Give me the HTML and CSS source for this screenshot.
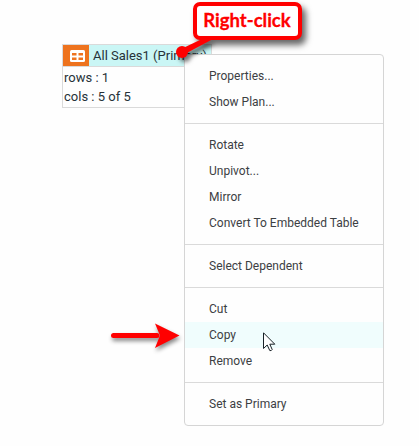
FILE: index.html
```
<!DOCTYPE html>
<html lang="en">
<head>
<meta charset="utf-8">
<title>Table menu</title>
<link rel="stylesheet" href="styles.css">
</head>
<body>
<main class="canvas">
  <section class="table-node">
    <header class="node-header">
      <span class="node-icon">
        <svg width="15" height="12" viewBox="0 0 15 12"><rect width="15" height="12" rx="1.5" fill="#fff"/><path d="M2 3h4.500v2.500H2zM8.500 3H13v2.500H8.500zM2 7.500h4.500V10H2zM8.500 7.500H13V10H8.500z" fill="#ee731e"/></svg>
      </span>
      <span class="node-title">All Sales1 (Primary)</span>
    </header>
    <div class="node-row">rows : 1</div>
    <div class="node-row">cols : 5 of 5</div>
  </section>

  <nav class="menu">
    <div class="group">
      <div class="item">Properties...</div>
      <div class="item">Show Plan...</div>
    </div>
    <div class="group">
      <div class="item">Rotate</div>
      <div class="item">Unpivot...</div>
      <div class="item">Mirror</div>
      <div class="item">Convert To Embedded Table</div>
    </div>
    <div class="group">
      <div class="item">Select Dependent</div>
    </div>
    <div class="group">
      <div class="item">Cut</div>
      <div class="item active">Copy</div>
      <div class="item">Remove</div>
    </div>
    <div class="group">
      <div class="item">Set as Primary</div>
    </div>
  </nav>

  <div class="callout">Right-click</div>
  <svg class="pointer" width="50" height="40" viewBox="0 0 50 40"><path d="M11 21L32 11H43L13 27z" fill="#f00"/><circle cx="12" cy="24" r="6" fill="#f00"/></svg>
  <svg class="arrow" width="80" height="36" viewBox="0 0 80 36"><path d="M8.500 15.500H52" stroke="#f00" stroke-width="5" stroke-linecap="round"/><path d="M50 3.500L74.500 15.500L50 28L55 15.500z" fill="#f00"/></svg>
  <svg class="cursor" width="13" height="20" viewBox="0 0 13 20"><path d="M.5.8V16.500L4.200 13L6.800 18.600Q8.500 19 9.200 17.500L6.800 12.200H11.800z" fill="#fff" stroke="#182126"/></svg>
</main>
</body>
</html>
```
FILE: styles.css
```
body {
  margin: 0;
  background: #fefefe;
  font-family: Roboto, "Liberation Sans", sans-serif;
  color: #3c4043;
}
.canvas {
  position: relative;
  width: 419px;
  height: 446px;
  overflow: hidden;
}
.table-node {
  position: absolute;
  left: 62px;
  top: 44px;
  width: 150px;
  height: 64px;
  box-sizing: border-box;
  border: 1px solid #dadada;
  font-size: 13px;
  color: #263238;
}
.node-header {
  display: flex;
  height: 21px;
  margin-bottom: 1px;
  border-bottom: 1px solid #dadada;
  background: #caf6f5;
  line-height: 21px;
  white-space: nowrap;
}
.node-icon {
  display: flex;
  align-items: center;
  justify-content: center;
  width: 26px;
  margin-right: 4px;
  background: #ee731e;
}
.node-icon svg { margin-left: 3px; }
.node-row {
  padding-left: 1px;
  line-height: 19px;
}
.menu {
  position: absolute;
  left: 184px;
  top: 54px;
  width: 200px;
  box-sizing: border-box;
  border: 1px solid #d5d5d5;
  border-radius: 4px;
  background: #fefefe;
  font-size: 12px;
}
.group { padding: 8px 0; }
.group + .group { border-top: 1px solid #dadada; }
.item {
  height: 26px;
  padding-left: 24px;
  line-height: 26px;
}
.active { background: #f0fdfd; }
.callout {
  position: absolute;
  left: 193px;
  top: 2px;
  width: 109px;
  height: 38px;
  box-sizing: border-box;
  border: 4.500px solid #f00;
  border-radius: 7px;
  background: #fff;
  box-shadow: 4px 5px 6px #0009;
  color: #f00;
  font: bold 18.500px/29px Lato, sans-serif;
  -webkit-text-stroke: 0.300px #f00;
  text-align: center;
  text-indent: -1px;
}
.pointer {
  position: absolute;
  left: 170px;
  top: 28px;
  filter: drop-shadow(3px 4px 2px #0008);
}
.arrow {
  position: absolute;
  left: 105px;
  top: 320px;
  filter: drop-shadow(1px 3px 2px #0007);
}
.cursor {
  position: absolute;
  left: 263px;
  top: 332px;
}
```
